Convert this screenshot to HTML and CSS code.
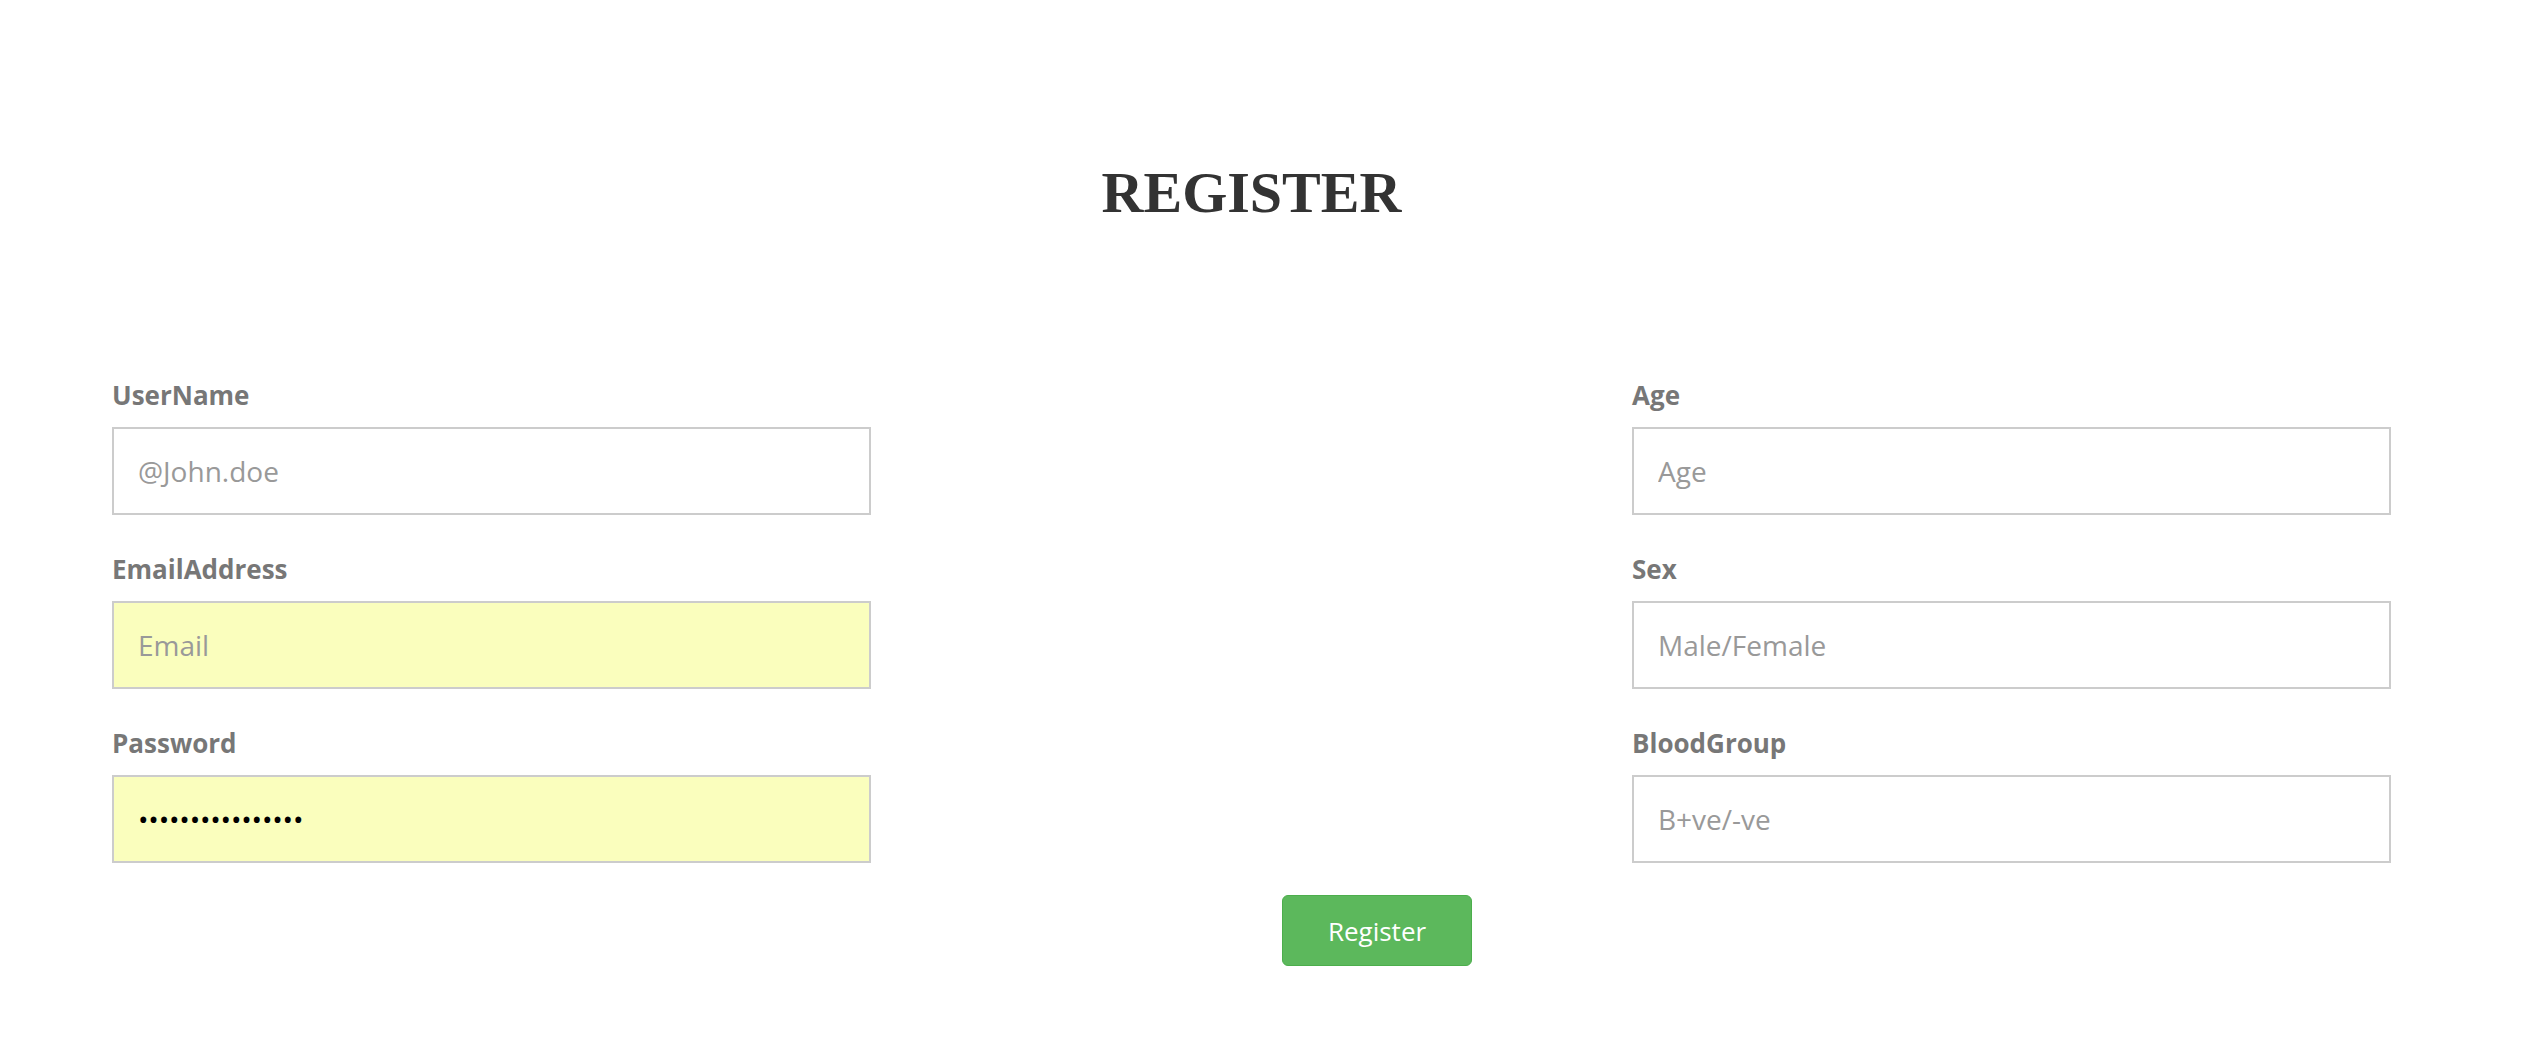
FILE: index.html
```html
<!DOCTYPE html>
<html lang="en">
<head>
<meta charset="utf-8">
<title>Register</title>
<link rel="stylesheet" href="styles.css">
</head>
<body>
<div class="page">
  <h1 class="title">REGISTER</h1>
  <form class="form">
    <div class="grid">
      <div class="col">
        <div class="group">
          <label class="label" for="username">UserName</label>
          <input class="field" id="username" type="text" placeholder="@John.doe">
        </div>
        <div class="group">
          <label class="label" for="email">EmailAddress</label>
          <input class="field autofill" id="email" type="email" placeholder="Email">
        </div>
        <div class="group">
          <label class="label" for="password">Password</label>
          <input class="field autofill pass" id="password" type="password" value="passwordpassword">
        </div>
      </div>
      <div class="col"></div>
      <div class="col">
        <div class="group">
          <label class="label" for="age">Age</label>
          <input class="field" id="age" type="text" placeholder="Age">
        </div>
        <div class="group">
          <label class="label" for="sex">Sex</label>
          <input class="field" id="sex" type="text" placeholder="Male/Female">
        </div>
        <div class="group">
          <label class="label" for="blood">BloodGroup</label>
          <input class="field" id="blood" type="text" placeholder="B+ve/-ve">
        </div>
      </div>
    </div>
    <div class="actions">
      <button class="btn" type="button">Register</button>
    </div>
  </form>
</div>
</body>
</html>
```
FILE: styles.css
```css
html, body {
  margin: 0;
  padding: 0;
  background: #ffffff;
}

body {
  font-family: "Open Sans", "Liberation Sans", sans-serif;
  color: #333333;
}

.page {
  width: 2279px;
  margin-left: 112px;
}

.title {
  margin: 161px 0 0 0;
  font-family: "Liberation Serif", "DejaVu Serif", serif;
  font-weight: 700;
  font-size: 58px;
  line-height: 64px;
  color: #333333;
  text-align: center;
}

.form {
  margin-top: 153px;
}

.grid {
  display: grid;
  grid-template-columns: 759px 1fr 759px;
}

.col {
  display: flex;
  flex-direction: column;
}

.group {
  display: flex;
  flex-direction: column;
  margin-bottom: 37px;
}

.group:last-child {
  margin-bottom: 0;
}

.label {
  font-weight: 700;
  font-size: 26px;
  line-height: 34px;
  color: #777777;
  margin-bottom: 15px;
}

.field {
  box-sizing: border-box;
  width: 100%;
  height: 88px;
  margin: 0;
  border: 2px solid #cccccc;
  border-radius: 0;
  padding: 0 24px;
  background: #ffffff;
  font-family: "Open Sans", "Liberation Sans", sans-serif;
  font-size: 28px;
  color: #000000;
  outline: none;
}

.field::placeholder {
  color: #999999;
  opacity: 1;
}

.autofill {
  background: #fafebd;
}

.pass {
  font-size: 28px;
  letter-spacing: -0.2px;
}

.actions {
  margin-top: 32px;
  padding-left: 1170px;
}

.btn {
  box-sizing: border-box;
  width: 190px;
  height: 71px;
  padding: 0;
  border: 1px solid #4cae4c;
  border-radius: 6px;
  background: #5cb85c;
  color: #ffffff;
  font-family: "Open Sans", "Liberation Sans", sans-serif;
  font-size: 26px;
  font-weight: 400;
  cursor: pointer;
}
```
